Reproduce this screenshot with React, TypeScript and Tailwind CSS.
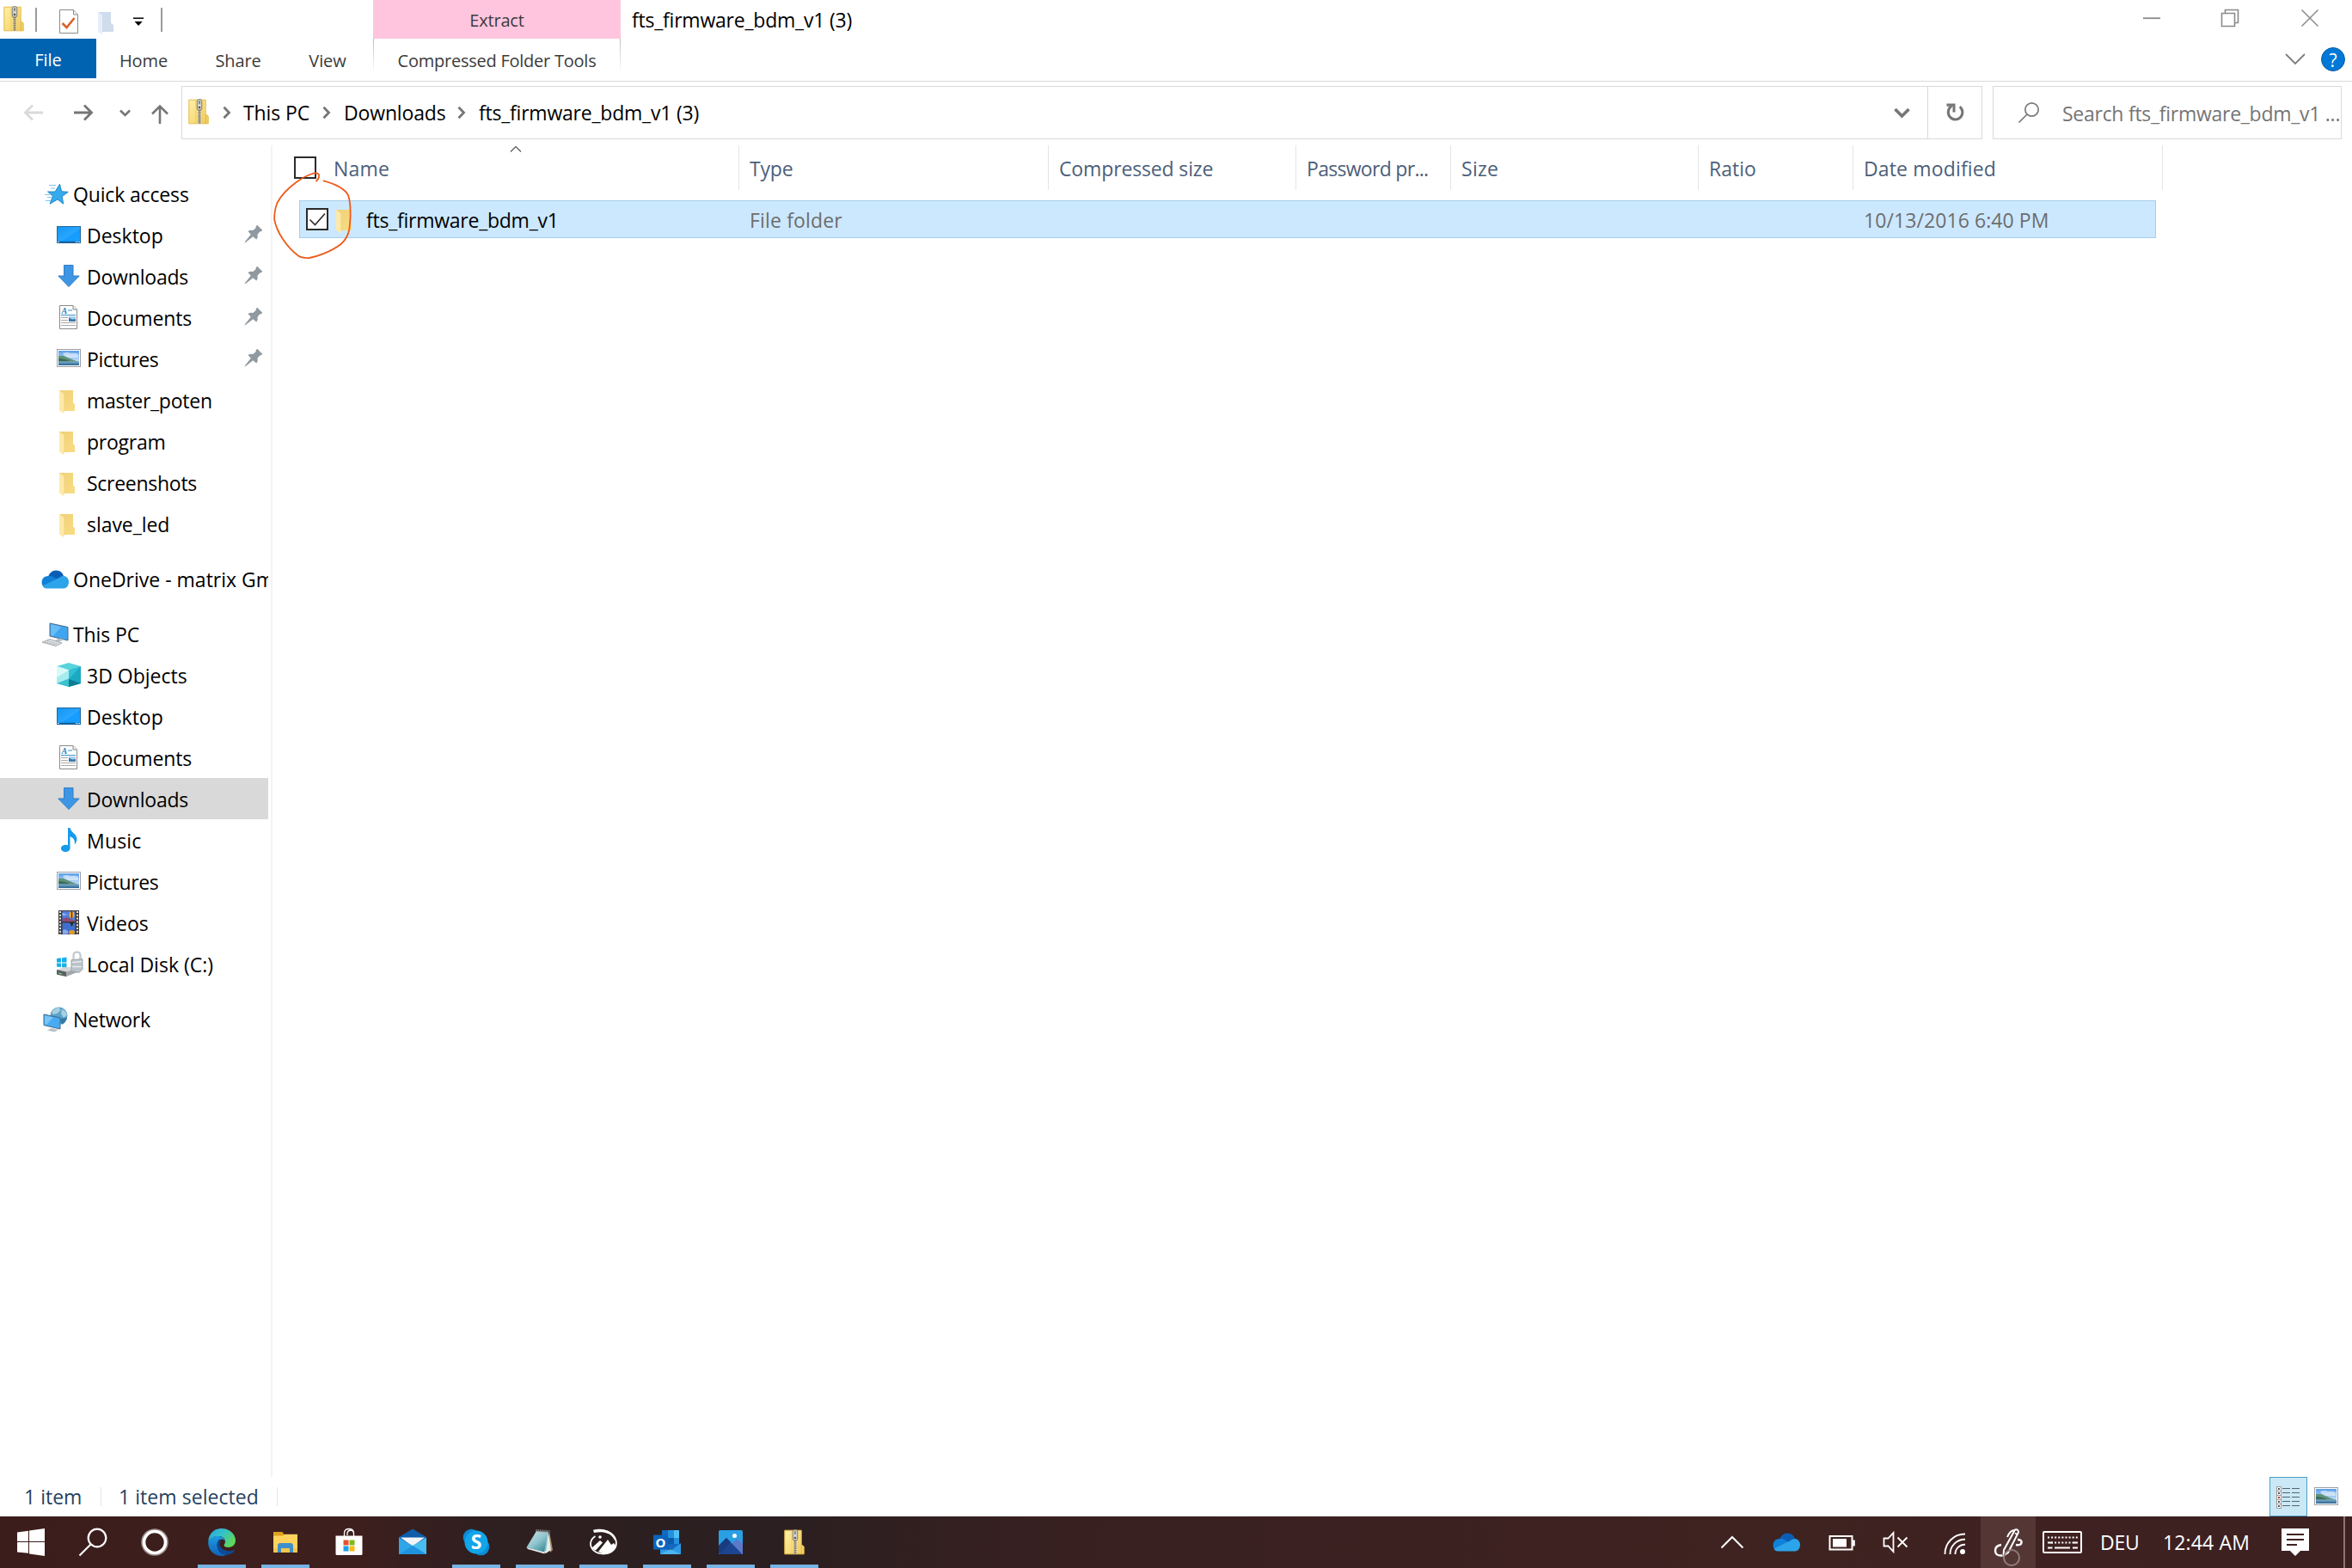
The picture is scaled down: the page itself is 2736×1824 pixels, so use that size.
import type { ReactNode } from "react";
import clsx from "clsx";

interface NavItem {
  label: string;
  icon: ReactNode;
  tracking?: string;
  root?: boolean;
  pinned?: boolean;
  selected?: boolean;
}

/* ---------- file type icons ---------- */

function ZipIcon() {
  return (
    <svg className="h-[30px] w-[24px] shrink-0" viewBox="0 0 24 30">
      <defs>
        <linearGradient id="zip-body" x1="0" y1="0" x2="1" y2="1">
          <stop offset="0" stopColor="#fff0a8" />
          <stop offset="1" stopColor="#f3cd5c" />
        </linearGradient>
      </defs>
      <path d="M.8 1.2h19.4v16.6l3 2.2v8.8H.8z" fill="url(#zip-body)" stroke="#e3bb48" strokeWidth="1" />
      <path d="M20.2 17.8v11" stroke="#dcb040" strokeWidth="1" />
      <path d="M9 1v28M17 1v28" stroke="#e8c862" strokeWidth=".8" />
      <path d="M13 12v17" stroke="#a3946a" strokeWidth="4" />
      <path d="M13 12v17" stroke="#f1ead0" strokeWidth="4" strokeDasharray="1 1.2" />
      <path d="M13 12v17" stroke="#6b6450" strokeWidth=".8" />
      <rect x="10.3" y=".6" width="5.4" height="12.4" rx="2" fill="#d2d2cf" stroke="#77756c" strokeWidth=".9" />
      <rect x="12" y="2" width="2" height="4" rx="1" fill="#888" />
      <circle cx="13" cy="10" r="1.3" fill="#555" />
    </svg>
  );
}

function FolderIcon() {
  return (
    <svg className="size-[32px]" viewBox="0 0 32 32">
      <defs>
        <linearGradient id="folder-back" x1="0" y1="0" x2="1" y2="1">
          <stop offset="0" stopColor="#f0d077" />
          <stop offset="1" stopColor="#f8dc84" />
        </linearGradient>
      </defs>
      <path d="M5 5h16v14.5l2 1.5v8H10z" fill="url(#folder-back)" />
      <path d="M5 5l5.5 4v21.5q0 1.8-1.5 1L5 28.5z" fill="#fde9a9" />
      <path d="M5 5l5.5 4v21" fill="none" stroke="#f4d98b" strokeWidth=".6" />
    </svg>
  );
}

function DesktopIcon() {
  return (
    <svg className="size-[32px]" viewBox="0 0 32 32">
      <defs>
        <linearGradient id="desktop" x1="0" y1="0" x2="1" y2="1">
          <stop offset="0" stopColor="#1196f3" />
          <stop offset=".55" stopColor="#2aa6ff" />
          <stop offset=".56" stopColor="#149cff" />
          <stop offset="1" stopColor="#19a1ff" />
        </linearGradient>
      </defs>
      <rect x="2.5" y="6.5" width="27" height="19" fill="url(#desktop)" stroke="#20689f" />
      <path d="M3 24.5h26" stroke="#135c92" strokeWidth="1.5" />
      <path d="M3 24.5h1.5M24 24.5h1.2M26 24.5h1.2M28 24.5h1" stroke="#fff" strokeWidth="1.2" />
    </svg>
  );
}

function DownloadsIcon() {
  return (
    <svg className="size-[32px]" viewBox="0 0 32 32">
      <path d="M10.5 3.5H21V16h7.2L16 28.500 3.8 16h6.7z" fill="#3e95e4" stroke="#2f7dc8" />
    </svg>
  );
}

function DocumentsIcon() {
  return (
    <svg className="size-[32px]" viewBox="0 0 32 32">
      <path d="M5.5 2.500H21L25.500 7v22.500h-20z" fill="#fff" stroke="#8b8b8b" />
      <path d="M21 2.500V7h4.500" fill="#eee" stroke="#8b8b8b" />
      <text x="7.5" y="11.5" fontSize="10" fontWeight="700" fontStyle="italic" fontFamily="Liberation Serif, serif" fill="#1d86c4">
        A
      </text>
      <path d="M15 8h5M7 13.500h17" stroke="#3a94c9" strokeWidth="1.2" />
      <path d="M7 16.500h8M7 19.500h8M7 22.500h17M7 25.500h17" stroke="#a9a9a9" strokeWidth="1" />
      <rect x="16" y="15" width="8" height="6" fill="#3c79a8" />
      <path d="M16 16.500l4 2 4-.5V15h-8z" fill="#a8cfee" />
    </svg>
  );
}

function PictureGlyph() {
  return (
    <>
      <defs>
        <linearGradient id="pic-sky" x1="0" y1="0" x2="0" y2="1">
          <stop offset="0" stopColor="#5b9de8" />
          <stop offset="1" stopColor="#eaf6ff" />
        </linearGradient>
        <linearGradient id="pic-sea" x1="0" y1="0" x2="0" y2="1">
          <stop offset="0" stopColor="#7fb0cf" />
          <stop offset="1" stopColor="#2a6390" />
        </linearGradient>
      </defs>
      <rect x="2.5" y="5.5" width="27" height="20" fill="#fff" stroke="#9aa0a6" />
      <rect x="4" y="7" width="24" height="17" fill="url(#pic-sky)" />
      <path d="M9 10q5-2 9 0 5-1 9 1v4H12z" fill="#fff" opacity=".55" />
      <path d="M4 13q6-1 11 2 5 2.500 13 5H4z" fill="#5f937a" />
      <path d="M4 16q8 0 14 3.500H4z" fill="#3b6b58" />
      <rect x="4" y="19.5" width="24" height="4.5" fill="url(#pic-sea)" />
    </>
  );
}

function PicturesIcon() {
  return (
    <svg className="size-[32px]" viewBox="0 0 32 32">
      <PictureGlyph />
    </svg>
  );
}

function QuickAccessIcon() {
  return (
    <svg className="size-[32px]" viewBox="0 0 32 32">
      <path
        d="M21.500 5.200l2.100 8.500 7.700.6-7 5.200 1.400 8.700-6.700-5.200-9 5.200 3.500-9.200-6-5H16z"
        fill="#35abee"
        stroke="#1c7fc0"
        strokeWidth=".9"
      />
      <path d="M9 6.500h8M11 10h5M4 17.500h6M7 20.500h5M5 24.500h6" stroke="#7fc3ec" strokeWidth="1" />
    </svg>
  );
}

function OneDriveIcon() {
  return (
    <svg className="size-[32px] overflow-visible" viewBox="0 0 32 32">
      <path d="M8 14.500C9 9.500 13 6.500 17 6.500c4.500 0 8 2.800 9 6.500l-9 5z" fill="#0a5eb5" />
      <path d="M1.500 24C-.5 20 .5 13.500 8 13c3-.5 5 .5 7 1.800l6 4L6 27q-3-.5-4.500-3z" fill="#1180d8" />
      <path d="M26 13c4 .5 6 3.500 6 7s-2 7.200-6 7.500H6c-2-.2-3.500-1-4.500-3L20 15.500q2.500-2.300 6-2.500z" fill="#2ba4ea" />
    </svg>
  );
}

function ThisPcIcon() {
  return (
    <svg className="size-[32px]" viewBox="0 0 32 32">
      <path d="M10 4l21 4.500v15.500L10 19z" fill="#3fa5f0" stroke="#4a6a86" strokeWidth="1" />
      <path d="M11 5l12 3-9 11-3-.8z" fill="#7cc6f8" opacity=".7" />
      <path d="M15 24.500l6-3 6 1.500-6 2.500z" fill="#b9c0c6" />
      <path d="M1 26l9-3.500 14 4.500-7 3.500z" fill="#dfe2e5" stroke="#9299a0" strokeWidth=".8" />
      <path d="M4 26l13 3M7 24.700l13 3.500" stroke="#9aa1a8" strokeWidth=".8" strokeDasharray="1.5 1" />
    </svg>
  );
}

function ObjectsIcon() {
  return (
    <svg className="size-[32px]" viewBox="0 0 32 32">
      <path d="M2 6l14-4 14 4-14 4.500z" fill="#59d3dd" />
      <path d="M2 6l14 4.500V30L2 26z" fill="#a6ecef" />
      <path d="M2 6l14 4.500L2 19z" fill="#d9f8f8" />
      <path d="M30 6l-14 4.500V30l14-4z" fill="#1ca9c4" />
      <path d="M30 6L16 21V10.500z" fill="#31bfd3" />
      <path d="M2 26l14-5.500V30z" fill="#3bc0cd" />
      <path d="M16 21l14 5-14 4z" fill="#0b7d93" />
    </svg>
  );
}

function MusicIcon() {
  return (
    <svg className="size-[32px]" viewBox="0 0 32 32">
      <ellipse cx="12.2" cy="25.9" rx="5.3" ry="4.2" fill="#169bea" />
      <path d="M15 2h2.500c.5 5 8 7 8 13 0 3.500-2 5.500-3 6.500 1.500-5-1.500-8-5-9.500V26H15z" fill="#169bea" />
    </svg>
  );
}

function VideosIcon() {
  return (
    <svg className="size-[32px]" viewBox="0 0 32 32">
      <rect x="4" y="2" width="24" height="28" fill="#3a3a3a" />
      <path d="M6 3v27M26 3v27" stroke="#e8e8e8" strokeWidth="2" strokeDasharray="2 1.8" />
      <rect x="8.5" y="3" width="15" height="12" fill="#4f7fe0" />
      <path d="M8.500 12l5-2 10 4v1h-15z" fill="#8d4a78" />
      <rect x="8.5" y="16.5" width="15" height="13" fill="#3f6fd0" />
      <path d="M8.500 5l6 2-6 1z" fill="#9fb9ee" />
      <ellipse cx="19.5" cy="7" rx="3" ry="4" fill="#efb22c" />
      <path d="M19.500 3v8" stroke="#7d241b" strokeWidth="1.5" />
      <path d="M17 16h5l-2.500 5z" fill="#2b2b2b" />
      <ellipse cx="19.5" cy="27.5" rx="3.5" ry="2.500" fill="#e59a24" />
      <path d="M9 25q3-2 6 1v3.500H9z" fill="#8aa9e8" />
    </svg>
  );
}

function LocalDiskIcon() {
  return (
    <svg className="size-[32px] overflow-visible" viewBox="0 0 32 32">
      <path d="M2 10l5-.7v5.200H2zM8 9.200l5.500-.7v6H8zM2 15.500h5V20l-5-.5zM8 15.500h5.500v5.300L8 20.200z" fill="#17b0e8" />
      <path d="M2 23l9-3h17l-3 6-12 5-11-2z" fill="#d4d6d8" />
      <path d="M2 23l11 2.500V31L2 28.500z" fill="#5c6064" />
      <path d="M13 25.500l14-4v4L13 31z" fill="#a6a9ac" />
      <path d="M4 27l4 1" stroke="#6be06b" strokeWidth="1.2" />
      <path d="M21.500 11V6.500q0-4 4-4t4 4V12" fill="none" stroke="#c3c7ca" strokeWidth="2.2" />
      <path d="M19 11.500l13-1v12l-4 4-9-2z" fill="#b9c3ca" stroke="#939da4" strokeWidth=".8" />
      <path d="M20 14.500l11-1M20 19.500h11" stroke="#e6ebee" strokeWidth="1.5" />
    </svg>
  );
}

function NetworkIcon() {
  return (
    <svg className="size-[32px]" viewBox="0 0 32 32">
      <circle cx="20.5" cy="12.5" r="10" fill="#5ba3c9" />
      <path d="M12.500 8q4-5 8-5l2 3-4 4-5 1zM24 5q5 2 6 7l-4 3-3-5z" fill="#a9cfe0" />
      <path d="M22 16q5-1 8-1-1 5-6 8z" fill="#2f7ba6" />
      <path d="M3 11l19 4v13L3 23.500z" fill="#48aaf2" stroke="#3e6684" strokeWidth="1" />
      <path d="M4 12.200l10 2.300L6 23l-2-.5z" fill="#8bd0fa" opacity=".7" />
      <path d="M7 29.500l5-2.500 8 2-5 2.500z" fill="#b9c0c6" />
    </svg>
  );
}

function PinIcon() {
  return (
    <svg className="size-[22px] shrink-0" viewBox="0 0 22 22">
      <path
        d="M15.200.8l6 6q-.6 1.800-3 1.700l-2.700 3.300q1 3.200-1.200 5.800l-4-3.400L2 20.800l-1.400.6.5-1.500 6.700-8.200-3.300-3.600q2.500-2 5.800-1.100l3.200-2.700q-.3-2.200 1.700-3.500z"
        fill="#8f999f"
      />
    </svg>
  );
}

/* ---------- title bar and ribbon ---------- */

function QuickToolbar() {
  return (
    <div className="flex h-[45px] items-center pl-[4px] pt-px">
      <div className="pb-[3px]">
        <ZipIcon />
      </div>
      <div className="ml-[13px] h-[28px] w-[2px] bg-[#9b9b9b]" />
      <svg className="ml-[25px] mt-[4px] h-[30px] w-[24px]" viewBox="0 0 24 30">
        <path d="M1.500 1.500h16l5 5.500v21.500h-21z" fill="#fff" stroke="#8a8a8a" />
        <path d="M17.500 1.500V7h5" fill="#eee" stroke="#8a8a8a" />
        <path d="M4.500 17l5 5L18.500 11" fill="none" stroke="#d9622b" strokeWidth="2.6" />
      </svg>
      <svg className="ml-[21px] mt-[8px] h-[28px] w-[20px]" viewBox="0 0 20 28">
        <path d="M1 1h15v13l3 2v8H6z" fill="#cfdcec" />
        <path d="M1 1l5 3.500v23L1 24z" fill="#e6eefa" />
      </svg>
      <svg className="ml-[22px] mt-[6px] h-[12px] w-[12px]" viewBox="0 0 12 12">
        <path d="M0 1.200h12" stroke="#000" strokeWidth="1.5" />
        <path d="M1.500 5h9.200L6.100 10z" fill="#000" />
      </svg>
      <div className="ml-[20px] h-[28px] w-[2px] bg-[#9b9b9b]" />
    </div>
  );
}

function WindowControls() {
  return (
    <div className="flex h-[45px] items-start pr-[38px] pt-[10px] text-[#8a8a8a]">
      <svg className="mr-[69px] size-[22px]" viewBox="0 0 22 22">
        <path d="M1 11.200h20" stroke="currentColor" strokeWidth="1.8" />
      </svg>
      <svg className="mr-[71px] size-[22px]" viewBox="0 0 22 22" fill="none" stroke="currentColor" strokeWidth="1.6">
        <path d="M1.500 5.500h15v15h-15z" />
        <path d="M5.500 5.500v-4h15v15h-4" />
      </svg>
      <svg className="size-[22px]" viewBox="0 0 22 22">
        <path d="M1.500 1.500l19 19M20.500 1.500l-19 19" stroke="currentColor" strokeWidth="1.5" />
      </svg>
    </div>
  );
}

function Header() {
  return (
    <header className="flex h-[95px] shrink-0 border-b border-[#dadada]">
      <div className="w-[434px]">
        <QuickToolbar />
        <div className="flex h-[46px] text-[20px] text-[#3b3b3b]">
          <div className="flex w-[112px] items-center justify-center bg-[#0063b1] pt-[4px] text-white">File</div>
          <div className="flex w-[110px] items-center justify-center pt-[6px] tracking-[-0.1px]">Home</div>
          <div className="flex w-[110px] items-center justify-center pt-[6px] tracking-[-0.13px]">Share</div>
          <div className="flex w-[98px] items-center justify-center pt-[6px] tracking-[-0.07px]">View</div>
        </div>
      </div>

      <div className="w-[288px] text-[20px] text-[#3b3b3b]">
        <div className="flex h-[45px] items-center justify-center bg-[#ffc5de] pt-[2px] tracking-[-0.18px]">Extract</div>
        <div className="flex h-[46px] items-center">
          <div className="h-[40px] w-px self-start bg-gradient-to-b from-[#bdbdbd] to-white" />
          <div className="flex-1 pt-[6px] text-center tracking-[-0.24px]">Compressed Folder Tools</div>
          <div className="h-[40px] w-px self-start bg-gradient-to-b from-[#bdbdbd] to-white" />
        </div>
      </div>

      <div className="flex h-[45px] flex-1 items-center pl-[13px] pt-[2px] text-[23px] tracking-[-0.22px]">
        fts_firmware_bdm_v1 (3)
      </div>

      <div className="flex flex-col items-end">
        <WindowControls />
        <div className="flex items-center gap-[18px] pr-[8px] pt-[10px]">
          <svg className="h-[14px] w-[24px]" viewBox="0 0 24 14">
            <path d="M1 1l11 11L23 1" fill="none" stroke="#7d7d7d" strokeWidth="1.8" />
          </svg>
          <div className="flex size-[28px] items-center justify-center rounded-full border border-[#0b5ea5] bg-[#0078d7] pt-[2px] text-[21px] leading-none text-white">
            ?
          </div>
        </div>
      </div>
    </header>
  );
}

/* ---------- address bar ---------- */

function Crumb() {
  return (
    <svg className="h-[16px] w-[10px] shrink-0" viewBox="0 0 10 16">
      <path d="M1.500 1.800L7.500 8l-6 6.200" fill="none" stroke="#767676" strokeWidth="2.8" />
    </svg>
  );
}

function AddressBar() {
  return (
    <div className="flex h-[67px] shrink-0 pr-[12px] pt-[5px]">
      <div className="flex w-[211px] items-center pl-[27px]">
        <svg className="h-[20px] w-[24px]" viewBox="0 0 24 20" fill="none" stroke="#dadada" strokeWidth="2.8">
          <path d="M23 10H3M11 1.500L2.500 10l8.500 8.500" />
        </svg>
        <svg className="ml-[34px] h-[20px] w-[24px]" viewBox="0 0 24 20" fill="none" stroke="#767676" strokeWidth="2.8">
          <path d="M1 10h20M13 1.500l8.500 8.500-8.500 8.500" />
        </svg>
        <svg className="ml-[30px] h-[9px] w-[13px]" viewBox="0 0 13 9" fill="none" stroke="#767676" strokeWidth="2.6">
          <path d="M1 1.500l5.500 5.500L12 1.500" />
        </svg>
        <svg className="ml-[23px] mt-[3px] h-[23px] w-[22px]" viewBox="0 0 22 23" fill="none" stroke="#767676" strokeWidth="2.6">
          <path d="M11 23V3M2 11.500l9-9 9 9" />
        </svg>
      </div>

      <div className="flex h-[62px] w-[2095px] items-center border border-[#d9d9d9] pl-[7px] text-[23px]">
        <div className="pb-[3px]">
          <ZipIcon />
        </div>
        <div className="ml-[16px]">
          <Crumb />
        </div>
        <span className="ml-[14px] w-[92px] pt-px tracking-[-0.1px]">This PC</span>
        <Crumb />
        <span className="ml-[15px] w-[132px] pt-px tracking-[-0.15px]">Downloads</span>
        <Crumb />
        <span className="ml-[15px] flex-1 pt-px tracking-[-0.22px]">fts_firmware_bdm_v1 (3)</span>
        <svg className="mr-[20px] h-[13px] w-[19px]" viewBox="0 0 19 13">
          <path d="M1.500 2l8 8 8-8" fill="none" stroke="#767676" strokeWidth="3.6" />
        </svg>
        <div className="flex h-full w-[63px] items-center justify-center border-l border-[#d9d9d9]">
          <svg className="h-[24px] w-[22px]" viewBox="0 0 22 24">
            <path d="M16.800 5.200a8.300 8.300 0 1 1-9.600-.6" fill="none" stroke="#767676" strokeWidth="3" />
            <path d="M1.500 1.500h10v10H8.500V4.800h-7z" fill="#767676" />
          </svg>
        </div>
      </div>

      <div className="ml-[12px] flex h-[62px] w-[406px] items-center border border-[#d9d9d9] text-[23px] text-[#757575]">
        <svg className="ml-[28px] h-[26px] w-[26px] shrink-0" viewBox="0 0 26 26" fill="none" stroke="#7b7b7b" strokeWidth="1.7">
          <circle cx="16.5" cy="9.5" r="7.7" />
          <path d="M11 15L1.500 24.500" />
        </svg>
        <span className="ml-[26px] whitespace-nowrap pt-[3px] tracking-[-0.27px]">Search fts_firmware_bdm_v1 ...</span>
      </div>
    </div>
  );
}

/* ---------- navigation pane ---------- */

const QUICK_ACCESS: NavItem[] = [
  { label: "Quick access", icon: <QuickAccessIcon />, tracking: "tracking-[-0.15px]", root: true },
  { label: "Desktop", icon: <DesktopIcon />, pinned: true },
  { label: "Downloads", icon: <DownloadsIcon />, tracking: "tracking-[-0.2px]", pinned: true },
  { label: "Documents", icon: <DocumentsIcon />, tracking: "tracking-[-0.1px]", pinned: true },
  { label: "Pictures", icon: <PicturesIcon />, tracking: "tracking-[-0.35px]", pinned: true },
  { label: "master_poten", icon: <FolderIcon />, tracking: "tracking-[-0.25px]" },
  { label: "program", icon: <FolderIcon />, tracking: "tracking-[-0.25px]" },
  { label: "Screenshots", icon: <FolderIcon />, tracking: "tracking-[-0.27px]" },
  { label: "slave_led", icon: <FolderIcon />, tracking: "tracking-[-0.05px]" },
];

const ONE_DRIVE: NavItem[] = [
  { label: "OneDrive - matrix GmbH", icon: <OneDriveIcon />, tracking: "tracking-normal", root: true },
];

const THIS_PC: NavItem[] = [
  { label: "This PC", icon: <ThisPcIcon />, tracking: "tracking-[-0.1px]", root: true },
  { label: "3D Objects", icon: <ObjectsIcon /> },
  { label: "Desktop", icon: <DesktopIcon /> },
  { label: "Documents", icon: <DocumentsIcon />, tracking: "tracking-[-0.1px]" },
  { label: "Downloads", icon: <DownloadsIcon />, tracking: "tracking-[-0.2px]", selected: true },
  { label: "Music", icon: <MusicIcon />, tracking: "tracking-[0.2px]" },
  { label: "Pictures", icon: <PicturesIcon />, tracking: "tracking-[-0.35px]" },
  { label: "Videos", icon: <VideosIcon />, tracking: "tracking-[0.1px]" },
  { label: "Local Disk (C:)", icon: <LocalDiskIcon /> },
];

const NETWORK: NavItem[] = [
  { label: "Network", icon: <NetworkIcon />, tracking: "tracking-[-0.25px]", root: true },
];

function NavGroup({ items }: { items: NavItem[] }) {
  return (
    <ul>
      {items.map((item) => (
        <li
          key={item.label}
          className={clsx(
            "flex h-[48px] w-[312px] items-center overflow-hidden",
            item.root ? "pl-[48px]" : "pl-[64px]",
            item.selected && "bg-[#d9d9d9]",
          )}
        >
          <span className="mr-[5px] shrink-0">{item.icon}</span>
          <span className={clsx("flex-1 whitespace-nowrap pt-[2px]", item.tracking)}>{item.label}</span>
          {item.pinned && (
            <span className="mb-[2px] mr-[6px]">
              <PinIcon />
            </span>
          )}
        </li>
      ))}
    </ul>
  );
}

function Sidebar() {
  return (
    <nav className="mt-[7px] h-[1549px] w-[317px] shrink-0 border-r-2 border-[#f3f3f3] text-[23px]">
      <div className="flex flex-col gap-[16px] pt-[32px]">
        <NavGroup items={QUICK_ACCESS} />
        <NavGroup items={ONE_DRIVE} />
        <NavGroup items={THIS_PC} />
        <NavGroup items={NETWORK} />
      </div>
    </nav>
  );
}

/* ---------- file list ---------- */

const COLUMNS = [
  { label: "Type", width: "w-[360px]", tracking: "tracking-[-0.2px]" },
  { label: "Compressed size", width: "w-[288px]", tracking: "tracking-[-0.14px]" },
  { label: "Password pr...", width: "w-[180px]", tracking: "tracking-[-0.7px]" },
  { label: "Size", width: "w-[288px]", tracking: "tracking-[0.3px]" },
  { label: "Ratio", width: "w-[180px]", tracking: "tracking-normal" },
  { label: "Date modified", width: "w-[360px]", tracking: "tracking-[0.15px]" },
];

function CheckBox({ checked }: { checked?: boolean }) {
  return (
    <span className="block size-[26px] shrink-0 border-2 border-[#2b2b2b] bg-white">
      {checked && (
        <svg className="size-[22px]" viewBox="0 0 22 22">
          <path d="M2.500 11.500l6 6L20 4.500" fill="none" stroke="#2b2b2b" strokeWidth="1.6" />
        </svg>
      )}
    </span>
  );
}

function InkCircle() {
  return (
    <svg className="pointer-events-none absolute left-0 top-[30px] h-[110px] w-[110px]" viewBox="317 192 110 110">
      <path
        d="M368 210.500Q371.500 208 371 203.500C370.500 201 366 200.700 362 202.500Q353 205.500 346 211C337 217.500 327 227 322.500 236Q319 245 319.200 255.500C322 270 333 287 347 297.500Q351 300.500 360 300C368 298.500 385 293 396.500 284Q404.500 277 406.300 267Q407.800 256 407.600 246Q407.500 234 405 227Q399.500 216.500 376.500 210.300"
        fill="none"
        stroke="#ee5a1a"
        strokeWidth="1.8"
        strokeLinecap="round"
      />
    </svg>
  );
}

function FileList() {
  return (
    <main className="relative flex-1 text-[23px]">
      <div className="mt-[7px] flex h-[52px] text-[#4c607a]">
        <div className="flex w-[543px] items-center border-r border-[#e5e5e5] pl-[25px]">
          <CheckBox />
          <span className="ml-[20px] pt-[2px] tracking-[0.2px]">Name</span>
          <svg className="mb-[44px] ml-[140px] h-[8px] w-[14px]" viewBox="0 0 14 8">
            <path d="M1 7.500l6-6 6 6" fill="none" stroke="#555" strokeWidth="1.2" />
          </svg>
        </div>
        {COLUMNS.map((col) => (
          <div
            key={col.label}
            className={clsx("flex items-center border-r border-[#e5e5e5] pl-[12px] pt-[2px]", col.width, col.tracking)}
          >
            {col.label}
          </div>
        ))}
      </div>

      <div className="ml-[31px] mt-[12px] flex h-[44px] w-[2160px] items-center border border-[#a5cfea] bg-[#cce8ff] text-[#6d6d6d]">
        <span className="ml-[7px]">
          <CheckBox checked />
        </span>
        <span className="ml-[4px] mr-[8px] w-[32px]">
          <FolderIcon />
        </span>
        <span className="w-[446px] pt-[2px] tracking-[-0.25px] text-black">fts_firmware_bdm_v1</span>
        <span className="w-[1296px] pt-[2px] tracking-[0.16px]">File folder</span>
        <span className="pt-[2px] tracking-[0.08px]">10/13/2016 6:40 PM</span>
      </div>
      <InkCircle />
    </main>
  );
}

/* ---------- status bar ---------- */

function StatusBar() {
  return (
    <footer className="flex h-[46px] shrink-0 text-[23px] text-[#26415f]">
      <span className="flex h-[46px] w-[117px] items-center pl-[28px]">1 item</span>
      <div className="mt-[12px] h-[22px] w-px bg-[#e6e6e6]" />
      <span className="flex h-[46px] w-[204px] items-center pl-[20px] tracking-[0.05px]">1 item selected</span>
      <div className="mt-[12px] h-[22px] w-px bg-[#e6e6e6]" />
      <div className="ml-auto flex pr-[14px]">
        <div className="flex h-[46px] w-[44px] items-center justify-center border border-[#4a9fc4] bg-[#cbe8f6]">
          <svg className="mt-[2px] h-[26px] w-[28px]" viewBox="0 0 28 26">
            <path d="M.5.5h5v25h-5zM.5 5.500h5M.5 10.500h5M.5 15.500h5M.5 20.500h5" fill="#fff" stroke="#9a9a9a" />
            <path d="M2 3h2M2 8h2M2 18h2M2 23h2" stroke="#555" strokeWidth="1.8" />
            <path d="M2 13h2" stroke="#b03030" strokeWidth="1.8" />
            <path d="M7 2.500h9M18 2.500h9M7 7.500h9M18 7.500h9M7 12.500h9M18 12.500h9M7 17.500h9M18 17.500h9M7 22.500h9M18 22.500h9" stroke="#55646e" strokeWidth="1.2" />
          </svg>
        </div>
        <svg className="ml-[6px] mt-[7px] size-[32px]" viewBox="0 0 32 32">
          <PictureGlyph />
        </svg>
      </div>
    </footer>
  );
}

/* ---------- taskbar ---------- */

function EdgeIcon() {
  return (
    <svg className="size-[34px]" viewBox="0 0 34 34">
      <defs>
        <linearGradient id="edge-top" x1="0" y1="0" x2="1" y2=".6">
          <stop offset="0" stopColor="#2aa5e0" />
          <stop offset=".5" stopColor="#35c1c9" />
          <stop offset="1" stopColor="#5fd957" />
        </linearGradient>
        <linearGradient id="edge-left" x1="0" y1="0" x2="0" y2="1">
          <stop offset="0" stopColor="#1b9de2" />
          <stop offset="1" stopColor="#1160b8" />
        </linearGradient>
      </defs>
      <path d="M1.500 14C3 6 9 1 17 1c9 0 16 6.500 16 14 0 5-4 8-8.500 8-3.500 0-5-1.500-5-2.500s1.500-1.800 1.500-4.500c0-3.500-3.500-6-7.500-6C7 10 2.500 13 1.500 17z" fill="url(#edge-top)" />
      <path d="M1.200 17C2.500 12.500 7.500 10 12.500 10c4.500 0 8.500 2.500 8.500 6-.5-1.500-2-2.500-4-2.500-3.500 0-5.500 3-5.500 6.500 0 6 5 10.500 11 11.500-2 1-3.500 1.500-5.500 1.500-9 0-16-7-15.800-16z" fill="url(#edge-left)" />
      <path d="M13.500 15.500c-3 3-2.500 9 1 13 4 4 10 3.800 14 1.500 1.500-1 2.700-2.300 3.300-3.300.3-.7-.3-1-.8-.7-1.500.8-3.500 1.300-5.500 1.300-6 0-11-4-11-8.300 0-1.500.8-3 2-3.800-1 0-2 .1-3 .3z" fill="#0d4a94" />
    </svg>
  );
}

function ExplorerIcon() {
  return (
    <svg className="size-[34px]" viewBox="0 0 34 34">
      <path d="M3 5h10.500l2 3H31v5H3z" fill="#dda21b" />
      <path d="M3 9.500h11l2-1.800h15V29H3z" fill="#ffd35e" />
      <path d="M3 24h28v5H3z" fill="#f7c64c" />
      <path d="M8 29V21q0-3 3-3h12q3 0 3 3v8h-4v-5H12v5z" fill="#3f8fca" />
    </svg>
  );
}

function StoreIcon() {
  return (
    <svg className="size-[34px]" viewBox="0 0 34 34">
      <path d="M11.500 10V6.500q0-5 5.500-5t5.500 5V10M15 9V6q1-3 4-3 3.500.5 3.500 4" fill="none" stroke="#fff" strokeWidth="1.3" />
      <path d="M1.500 9.500h31v21q0 1.500-1.500 1.500H3q-1.500 0-1.500-1.500z" fill="#fff" />
      <path d="M10.500 14.500h6v6h-6z" fill="#e8502c" />
      <path d="M17.500 14.500h6v6h-6z" fill="#7fb916" />
      <path d="M10.500 21.500h6v6h-6z" fill="#1ba0e8" />
      <path d="M17.500 21.500h6v6h-6z" fill="#fbb811" />
    </svg>
  );
}

function MailIcon() {
  return (
    <svg className="size-[34px]" viewBox="0 0 34 34">
      <path d="M1 11L17 1.500 33 11v4H1z" fill="#0f5ca8" />
      <path d="M3 11.500h28L17 22z" fill="#f1f4f8" />
      <path d="M1 11.500L22 24v7H1z" fill="#2ea6e8" />
      <path d="M33 11.500V31H1l16-10z" fill="#48bdf2" />
      <path d="M1 31l16-10 16 10z" fill="#1f93dd" />
    </svg>
  );
}

function SkypeIcon() {
  return (
    <svg className="size-[34px]" viewBox="0 0 34 34">
      <circle cx="11.5" cy="11.5" r="9.8" fill="#0b8bd6" />
      <circle cx="22.5" cy="22.5" r="9.8" fill="#0b8bd6" />
      <circle cx="17" cy="17" r="13.5" fill="#12a5e8" />
      <text x="17" y="25" textAnchor="middle" fontSize="23" fontWeight="700" fontFamily="Open Sans, sans-serif" fill="#fff">
        S
      </text>
    </svg>
  );
}

function NotepadIcon() {
  return (
    <svg className="size-[34px]" viewBox="0 0 34 34">
      <defs>
        <linearGradient id="pad" x1="0" y1="0" x2=".8" y2="1">
          <stop offset="0" stopColor="#cfe6e9" />
          <stop offset=".55" stopColor="#8fc4cc" />
          <stop offset="1" stopColor="#2f8794" />
        </linearGradient>
      </defs>
      <path d="M28 4l4 22-3 3-2-8z" fill="#a58c60" />
      <path d="M13 4l14 1-4 24L1.500 23z" fill="url(#pad)" />
      <path d="M27 5l3 21-6 4-2-1z" fill="#e3eceb" />
      <path d="M26.500 9L24 27l-2 1.500z" fill="#6fb2bc" />
      <path d="M1.500 23l21 5.500v2L3 25z" fill="#e6eeee" />
      <path d="M12.500 3.500l16 1" stroke="#8b8b8b" strokeWidth="3" strokeDasharray="1.2 1" />
    </svg>
  );
}

function ScribbleIcon() {
  return (
    <svg className="size-[34px]" viewBox="0 0 34 34">
      <path d="M6 4.500C16 .5 29 5 31.500 15c2 9-5 15.500-14.500 15.500C8 30.500 1.500 25 2 18c.5-4 3-6.500 5.500-8" fill="none" stroke="#fff" strokeWidth="1.8" />
      <path d="M5 2.800C17-.5 30 5 32 15l-2.500-1C26 6 16 4 6 6z" fill="#fff" />
      <path d="M3 24l10-9 3 2.500-8 9zM11 28l11-14 4 6 3-2 3 4c-2 5-8 9-14 9z" fill="#fff" />
      <circle cx="13" cy="11" r="1.8" fill="#fff" />
    </svg>
  );
}

function OutlookIcon() {
  return (
    <svg className="size-[34px]" viewBox="0 0 34 34">
      <path d="M11 3h20v22H11z" fill="#1468bf" />
      <path d="M18 3h7v9h-7z" fill="#2491df" />
      <path d="M25 3h6v9h-6z" fill="#50c0f4" />
      <path d="M18 12h7v7h-7z" fill="#0d5cab" />
      <path d="M25 12h6v7h-6z" fill="#2491df" />
      <path d="M9 20l12 7 12-9v13H9z" fill="#2b9be4" />
      <path d="M9 31l12-6 12 6z" fill="#4cb5f0" />
      <path d="M1 8.500h17v17H1z" fill="#0c64bc" />
      <text x="9.5" y="22.5" textAnchor="middle" fontSize="15" fontWeight="700" fontFamily="Open Sans, sans-serif" fill="#fff">
        O
      </text>
    </svg>
  );
}

function PhotosIcon() {
  return (
    <svg className="size-[34px]" viewBox="0 0 34 34">
      <path d="M4.500 3h25Q31 3 31 4.500v25Q31 31 29.500 31h-25Q3 31 3 29.500v-25Q3 3 4.500 3z" fill="#2a9fe4" />
      <path d="M31 19l-7-6-7 7 10 11h4z" fill="#5c78c9" />
      <path d="M3 21l9-9 18 18.500q-.5.5-1 .5H5q-2 0-2-2z" fill="#1b4590" />
      <path d="M3 21l9-9 5 5L5 30q-2 0-2-1z" fill="#173c80" />
      <circle cx="21.5" cy="9.5" r="2.5" fill="#fff" />
    </svg>
  );
}

const TASKS: { name: string; icon: ReactNode; open: boolean }[] = [
  { name: "edge", icon: <EdgeIcon />, open: true },
  { name: "explorer", icon: <ExplorerIcon />, open: true },
  { name: "store", icon: <StoreIcon />, open: false },
  { name: "mail", icon: <MailIcon />, open: false },
  { name: "skype", icon: <SkypeIcon />, open: true },
  { name: "notepad", icon: <NotepadIcon />, open: true },
  { name: "scribble", icon: <ScribbleIcon />, open: true },
  { name: "outlook", icon: <OutlookIcon />, open: true },
  { name: "photos", icon: <PhotosIcon />, open: true },
  { name: "zip", icon: <ZipIcon />, open: true },
];

function Tray() {
  return (
    <div className="ml-auto flex h-full items-center text-[23px] text-white">
      <svg className="mr-[33px] h-[16px] w-[28px]" viewBox="0 0 28 16">
        <path d="M1.500 14.500L14 2l12.500 12.500" fill="none" stroke="#fff" strokeWidth="2" />
      </svg>
      <span className="mb-[2px] mr-[33px]">
        <OneDriveIcon />
      </span>
      <svg className="mr-[31px] mt-[2px] h-[20px] w-[32px]" viewBox="0 0 32 20">
        <path d="M1.500 2h26v15.500h-26z" fill="none" stroke="#fff" strokeWidth="2" />
        <path d="M5 5h16v9.500H5zM28 6.500h2.800v7H28z" fill="#fff" />
      </svg>
      <svg className="mr-[41px] h-[26px] w-[30px]" viewBox="0 0 30 26" fill="none" stroke="#fff" strokeWidth="1.8">
        <path d="M1.500 8.500h5l6-6.500v22l-6-6.500h-5z" />
        <path d="M17.500 7.500l11 11M28.500 7.500l-11 11" />
      </svg>
      <svg className="mr-[17px] mt-[4px] h-[26px] w-[26px]" viewBox="0 0 26 26" fill="none" stroke="#fff" strokeWidth="1.9">
        <path d="M1.500 25A23 23 0 0 1 25 1.500M7.500 25A17 17 0 0 1 25 7.800M13.500 25A11 11 0 0 1 25 13.800" />
        <circle cx="22" cy="22" r="3" fill="#fff" stroke="none" />
      </svg>
      <div className="relative flex h-full w-[64px] items-center justify-center bg-[#543735]">
        <svg className="size-[34px]" viewBox="0 0 34 34" fill="none" stroke="#fff" strokeWidth="2">
          <path d="M25 2.500q4-1 4 3L17 29l-5.500 3.500.5-6.500z" />
          <path d="M23 6L12 26M28 8l-3-1.500" strokeWidth="1.5" />
          <path d="M24 3q-5 .5-8 8" />
          <path d="M9 20q-7 1-7 7t8 5.500M28 14q5 0 4.500 3.500t-6.500 2.500" strokeWidth="2.4" />
        </svg>
        <div className="absolute left-[26px] top-[38px] size-[20px] rounded-full border-2 border-[#8f7c7b]" />
      </div>
      <svg className="ml-[7px] h-[28px] w-[48px]" viewBox="0 0 48 28" fill="none" stroke="#fff" strokeWidth="2">
        <rect x="2" y="2" width="44" height="24" rx="1" />
        <path d="M7 8.500h35M11 14.500h28" strokeDasharray="2 2.1" />
        <path d="M7 14.500h6M37 14.500h5M7 20.500h5.500M15 20.500h18M36 20.500h6" />
      </svg>
      <span className="ml-[20px] w-[73px] tracking-[-0.2px]">DEU</span>
      <span className="w-[138px] whitespace-nowrap tracking-[0.15px]">12:44 AM</span>
      <svg className="mr-[40px] size-[32px]" viewBox="0 0 32 32">
        <path d="M0 0h32v26H22l-6 6-6-6H0z" fill="#fff" />
        <path d="M6 7h20M6 13h20M6 19h12" stroke="#3f2222" strokeWidth="2" />
      </svg>
      <div className="mr-[8px] h-full w-[2px] bg-[#8b7675]" />
    </div>
  );
}

function Taskbar() {
  return (
    <div className="flex h-[60px] shrink-0 bg-[linear-gradient(90deg,#3b1d1b_0%,#3d1f1d_15%,#2e1f20_21%,#2b1f21_33%,#382020_45%,#3f2321_75%,#3d2020_100%)]">
      <div className="flex items-center pl-[20px]">
        <svg className="size-[32px]" viewBox="0 0 32 32">
          <path d="M0 4.500L13 2.700V15H0zM14 2.500L32 0v15H14zM0 16h13v12.800L0 27.500zM14 16h18v16l-18-2.500z" fill="#fff" />
        </svg>
        <svg className="ml-[39px] size-[34px]" viewBox="0 0 34 34" fill="none" stroke="#fff" strokeWidth="2.2">
          <circle cx="22" cy="12" r="10.3" />
          <path d="M14.500 19.500L1.500 32.500" />
        </svg>
        <svg className="ml-[38px] size-[34px]" viewBox="0 0 34 34" fill="none">
          <circle cx="17" cy="17" r="14.8" stroke="#9d8d8c" strokeWidth="2" />
          <circle cx="17" cy="17" r="12.5" stroke="#fff" strokeWidth="3.6" />
        </svg>
      </div>
      <div className="ml-[33px] flex gap-[18px]">
        {TASKS.map((task) => (
          <div
            key={task.name}
            className={clsx(
              "flex h-[60px] w-[56px] items-center justify-center border-b-4 pt-[4px]",
              task.open ? "border-[#76b4e6]" : "border-transparent",
            )}
          >
            {task.icon}
          </div>
        ))}
      </div>
      <Tray />
    </div>
  );
}

export default function App() {
  return (
    <div className="flex h-[1824px] w-[2736px] flex-col overflow-hidden bg-white font-['Open_Sans','Noto_Sans',sans-serif] text-black">
      <Header />
      <AddressBar />
      <div className="flex min-h-0 flex-1">
        <Sidebar />
        <FileList />
      </div>
      <StatusBar />
      <Taskbar />
    </div>
  );
}
